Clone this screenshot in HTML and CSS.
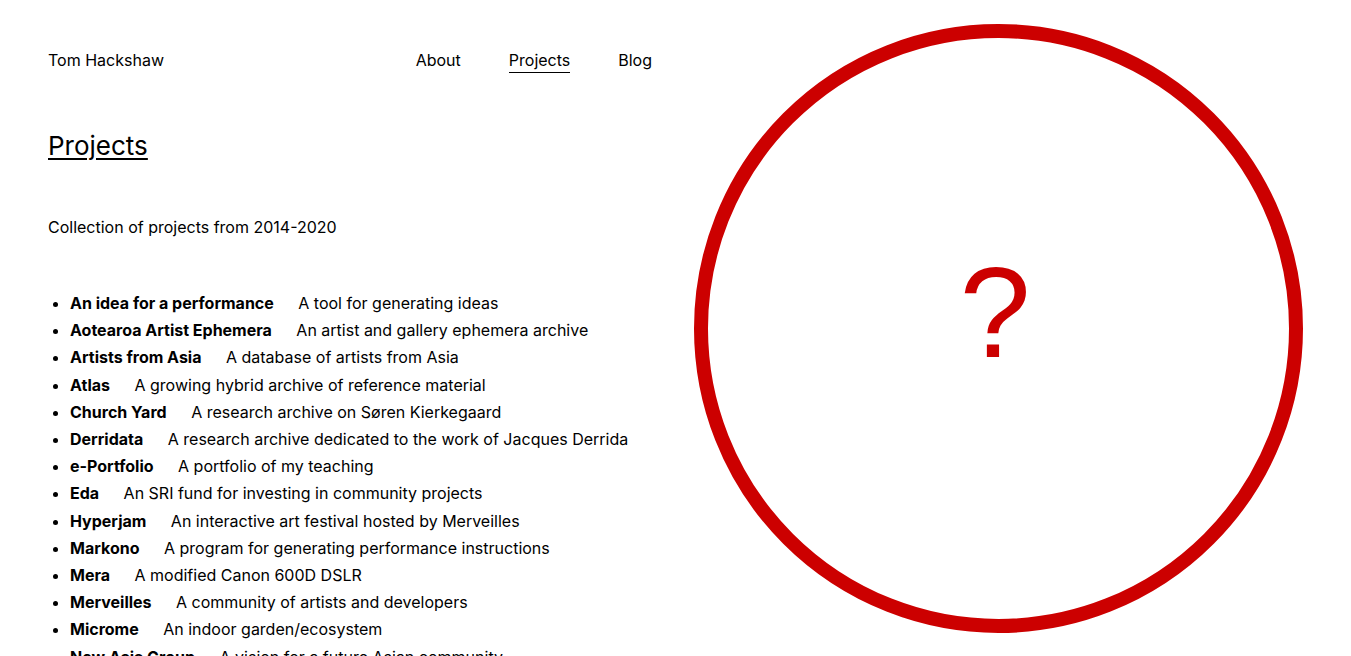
FILE: index.html
```html
<!DOCTYPE html>
<html lang="en">
<head>
<meta charset="utf-8">
<title>Projects — Tom Hackshaw</title>
<link rel="stylesheet" href="styles.css">
</head>
<body>
<div class="page">
  <main class="content">
    <header class="site-header">
      <a class="site-name" href="#">Tom Hackshaw</a>
      <nav class="nav">
        <a class="nav-link" href="#">About</a>
        <a class="nav-link is-current" href="#">Projects</a>
        <a class="nav-link" href="#">Blog</a>
      </nav>
    </header>
    <h1 class="page-title">Projects</h1>
    <p class="intro">Collection of projects from 2014-2020</p>
    <ul class="projects">
      <li><strong class="name">An idea for a performance</strong> <span class="desc">A tool for generating ideas</span></li>
      <li><strong class="name">Aotearoa Artist Ephemera</strong> <span class="desc">An artist and gallery ephemera archive</span></li>
      <li><strong class="name">Artists from Asia</strong> <span class="desc">A database of artists from Asia</span></li>
      <li><strong class="name">Atlas</strong> <span class="desc">A growing hybrid archive of reference material</span></li>
      <li><strong class="name">Church Yard</strong> <span class="desc">A research archive on Søren Kierkegaard</span></li>
      <li><strong class="name">Derridata</strong> <span class="desc">A research archive dedicated to the work of Jacques Derrida</span></li>
      <li><strong class="name">e-Portfolio</strong> <span class="desc">A portfolio of my teaching</span></li>
      <li><strong class="name">Eda</strong> <span class="desc">An SRI fund for investing in community projects</span></li>
      <li><strong class="name">Hyperjam</strong> <span class="desc">An interactive art festival hosted by Merveilles</span></li>
      <li><strong class="name">Markono</strong> <span class="desc">A program for generating performance instructions</span></li>
      <li><strong class="name">Mera</strong> <span class="desc">A modified Canon 600D DSLR</span></li>
      <li><strong class="name">Merveilles</strong> <span class="desc">A community of artists and developers</span></li>
      <li><strong class="name">Microme</strong> <span class="desc">An indoor garden/ecosystem</span></li>
      <li><strong class="name">New Asia Group</strong> <span class="desc">A vision for a future Asian community</span></li>
    </ul>
  </main>
  <aside class="figure">
    <svg class="unknown" width="609" height="609" viewBox="0 0 609 609" aria-label="Unknown">
      <circle cx="304.5" cy="304.5" r="297.5" fill="none" stroke="#cc0000" stroke-width="14"/>
      <text x="301" y="333" text-anchor="middle" class="qmark">?</text>
    </svg>
  </aside>
</div>
</body>
</html>
```
FILE: styles.css
```css
html, body {
  margin: 0;
  padding: 0;
  background: #fff;
}

body {
  font-family: Inter, "Noto Sans", "Liberation Sans", sans-serif;
  font-size: 16px;
  line-height: 24px;
  color: #000;
}

a {
  color: inherit;
  text-decoration: none;
}

.page {
  display: grid;
  grid-template-columns: 1fr 1fr;
  column-gap: 42px;
  padding: 0 48px;
}

.content {
  min-width: 0;
}

.site-header {
  display: flex;
  justify-content: space-between;
  align-items: flex-start;
  padding-top: 48px;
}

.nav {
  display: flex;
  gap: 48px;
}

.nav-link {
  display: inline-block;
  line-height: 24px;
  border-bottom: 1px solid transparent;
}

.nav-link.is-current {
  border-bottom-color: #000;
}

.page-title {
  margin: 57px 0 0;
  font-size: 26px;
  line-height: 32px;
  font-weight: 400;
  text-decoration: underline;
  text-decoration-thickness: 2px;
  text-underline-offset: 3px;
}

.intro {
  margin: 52px 0 0;
  line-height: 27px;
}

.projects {
  margin: 49px 0 0;
  padding-left: 22px;
  line-height: 27.2px;
}

.name {
  font-weight: 700;
  margin-right: 20px;
}

.figure {
  position: sticky;
  top: 0;
  height: 100vh;
  display: flex;
  align-items: center;
  justify-content: flex-end;
}

.unknown {
  display: block;
  flex: none;
}

.qmark {
  font-family: "Liberation Sans", Arial, sans-serif;
  font-size: 128px;
  fill: #cc0000;
}
```
